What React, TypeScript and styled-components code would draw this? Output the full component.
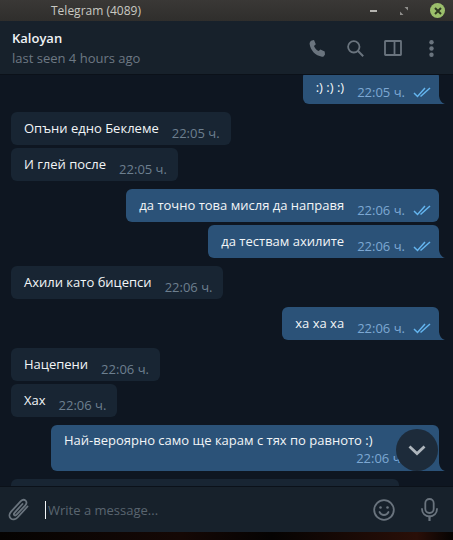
import styled, { createGlobalStyle } from 'styled-components';

const GlobalStyle = createGlobalStyle`
  html, body {
    margin: 0;
    padding: 0;
    background: #050403;
  }
  body {
    font-family: "Open Sans", "Liberation Sans", sans-serif;
  }
`;

type Message = {
  text: string;
  time: string;
  out?: boolean;
  tail?: boolean;
};

const messages: Message[] = [
  { text: 'Опъни едно Беклеме', time: '22:05 ч.' },
  { text: 'И глей после', time: '22:05 ч.' },
];

const CheckIcon = () => (
  <svg width="18" height="12" viewBox="0 0 18 12" fill="none" stroke="#64b5ef" strokeWidth="1.500">
    <path d="M1 7l3.500 3.500L12 2" />
    <path d="M7.500 10.500L17 2" />
  </svg>
);

const PhoneIcon = () => (
  <svg width="17" height="17" viewBox="0 0 17 17" fill="#6a747e">
    <path d="M2.800 .4l2.200-.4 1.800 4.300-1.800 1.700c.8 2.300 2.400 4 4.700 5.100l1.700-1.600 4.300 2.100 .3 2.800-1.200 1.800c-.5.400-1.200.6-1.900.5C6.600 15.800 1.400 10.600 .6 4.100.5 2.400 1.300 1 2.800 .4z" />
  </svg>
);

const SearchIcon = () => (
  <svg width="17" height="17" viewBox="0 0 17 17" fill="none" stroke="#6a747e" strokeWidth="1.800">
    <circle cx="6.800" cy="6.800" r="5.700" />
    <path d="M10.800 10.800L16.200 16.200" strokeWidth="2" />
  </svg>
);

const PanelIcon = () => (
  <svg width="18" height="16" viewBox="0 0 18 16" fill="none" stroke="#6a747e" strokeWidth="1.800">
    <rect x="1" y="1" width="16" height="14" rx="0.500" />
    <path d="M10.500 1v14" />
  </svg>
);

const MoreIcon = () => (
  <svg width="5" height="17" viewBox="0 0 5 17" fill="#6a747e">
    <circle cx="2.500" cy="2.300" r="2.200" />
    <circle cx="2.500" cy="8.500" r="2.200" />
    <circle cx="2.500" cy="14.700" r="2.200" />
  </svg>
);

const ClipIcon = () => (
  <svg width="22" height="24" viewBox="0 0 22 24" fill="none" stroke="#6a747e" strokeWidth="1.800" strokeLinecap="round">
    <path d="M19.500 8.500L9.500 19.500c-2 2.200-5 2.500-6.800.8-1.800-1.700-1.600-4.500.4-6.700L12.800 3.200c1.400-1.500 3.500-1.800 4.800-.6 1.300 1.200 1.100 3.200-.3 4.700L8.600 16.700c-.7.800-1.700.9-2.300.4-.6-.6-.5-1.500.2-2.300L14.500 6" />
  </svg>
);

const SmileIcon = () => (
  <svg width="22" height="22" viewBox="0 0 22 22" fill="none" stroke="#6a747e" strokeWidth="1.800" strokeLinecap="round">
    <circle cx="11" cy="11" r="9.800" />
    <circle cx="7.500" cy="8.500" r="1.300" fill="#6a747e" stroke="none" />
    <circle cx="14.500" cy="8.500" r="1.300" fill="#6a747e" stroke="none" />
    <path d="M6.500 13c1 2 2.600 3 4.500 3s3.500-1 4.500-3" />
  </svg>
);

const MicIcon = () => (
  <svg width="17" height="23" viewBox="0 0 17 23" fill="none" stroke="#6a747e" strokeWidth="1.800" strokeLinecap="round">
    <rect x="4.300" y="1" width="8.400" height="14" rx="4.200" />
    <path d="M1 11c0 4.500 3.300 7.500 7.500 7.500S16 15.500 16 11" />
    <path d="M8.500 18.500V22.500" strokeWidth="2.200" />
  </svg>
);

const Bubble = ({ text, time, out, tail }: Message) => (
  <Row $out={out}>
    <Box $out={out} $tail={tail}>
      <BubbleText>{text}</BubbleText>
      <Meta>
        <Time $out={out}>{time}</Time>
        {out && <CheckIcon />}
      </Meta>
      {tail && <Tail />}
    </Box>
  </Row>
);

export default function App() {
  return (
    <Window>
      <GlobalStyle />
      <TitleBar>
        <TitleText>Telegram (4089)</TitleText>
        <WindowControls>
          <MinButton />
          <svg width="8" height="8" viewBox="0 0 8 8" fill="#8f8e8b">
            <path d="M4.500 0H8v3.500zM0 4.500V8h3.500z" />
          </svg>
          <CloseButton>
            <svg width="8" height="8" viewBox="0 0 8 8" stroke="#2f3a22" strokeWidth="2">
              <path d="M1 1l6 6M7 1l-6 6" />
            </svg>
          </CloseButton>
        </WindowControls>
      </TitleBar>

      <Header>
        <Peer>
          <PeerName>Kaloyan</PeerName>
          <PeerStatus>last seen 4 hours ago</PeerStatus>
        </Peer>
        <HeaderIcons>
          <HeaderButton><PhoneIcon /></HeaderButton>
          <HeaderButton><SearchIcon /></HeaderButton>
          <HeaderButton><PanelIcon /></HeaderButton>
          <HeaderButton><MoreIcon /></HeaderButton>
        </HeaderIcons>
      </Header>

      <Chat>
        <FirstGroup>
          <Bubble text=":) :) :)" time="22:05 ч." out tail />
        </FirstGroup>
        <Group>
          {messages.map((m) => (
            <Bubble key={m.text} {...m} />
          ))}
        </Group>
        <Group>
          <Bubble text="да точно това мисля да направя" time="22:06 ч." out />
          <Bubble text="да тествам ахилите" time="22:06 ч." out tail />
        </Group>
        <Bubble text="Ахили като бицепси" time="22:06 ч." />
        <Bubble text="ха ха ха" time="22:06 ч." out tail />
        <Group>
          <Bubble text="Нацепени" time="22:06 ч." />
          <Bubble text="Хах" time="22:06 ч." />
        </Group>
        <Row $out>
          <TallBox>
            <BubbleText>Най-вероярно само ще карам с тях по равното :)</BubbleText>
            <TallMeta>
              <Time $out>22:06 ч.</Time>
            </TallMeta>
            <Tail />
          </TallBox>
        </Row>
        <Row>
          <ClippedBox />
        </Row>
        <ScrollDown>
          <svg width="18" height="11" viewBox="0 0 18 11" fill="none" stroke="#aeb6bd" strokeWidth="2.800">
            <path d="M1.500 1.500L9 8.500l7.500-7" />
          </svg>
        </ScrollDown>
      </Chat>

      <Composer>
        <ClipIcon />
        <Caret />
        <Placeholder>Write a message...</Placeholder>
        <ComposerIcons>
          <SmileIcon />
          <MicIcon />
        </ComposerIcons>
      </Composer>
      <Desktop />
    </Window>
  );
}

const Window = styled.div`
  width: 453px;
  height: 540px;
  display: flex;
  flex-direction: column;
  overflow: hidden;
`;

const TitleBar = styled.div`
  height: 21px;
  flex-shrink: 0;
  display: flex;
  align-items: center;
  justify-content: space-between;
  padding: 0 8px 0 51px;
  background: linear-gradient(#3a3836, #2f2e2c);
  box-sizing: border-box;
`;

const TitleText = styled.span`
  font-size: 12px;
  color: #c9c9c2;
`;

const WindowControls = styled.div`
  display: flex;
  align-items: center;
  gap: 19px;
`;

const MinButton = styled.div`
  width: 7px;
  height: 2px;
  background: #b5b4b0;
  margin-right: 4px;
`;

const CloseButton = styled.div`
  width: 15px;
  height: 15px;
  border-radius: 50%;
  background: #9bbf6b;
  display: flex;
  align-items: center;
  justify-content: center;
  margin-left: 3px;
`;

const Header = styled.div`
  height: 54px;
  flex-shrink: 0;
  display: flex;
  align-items: center;
  justify-content: space-between;
  padding: 0 3px 0 12px;
  background: #17212b;
  border-bottom: 1px solid #0b1119;
  box-sizing: border-box;
`;

const Peer = styled.div`
  display: flex;
  flex-direction: column;
  gap: 2px;
`;

const PeerName = styled.div`
  font-size: 13px;
  font-weight: 600;
  line-height: 18px;
  color: #f0f3f5;
`;

const PeerStatus = styled.div`
  font-size: 13px;
  line-height: 18px;
  color: #6d7883;
`;

const HeaderIcons = styled.div`
  display: flex;
  align-items: center;
  margin-top: 1px;
`;

const HeaderButton = styled.div`
  width: 38px;
  display: flex;
  align-items: center;
  justify-content: center;
`;

const Chat = styled.div`
  position: relative;
  flex: 1;
  min-height: 0;
  display: flex;
  flex-direction: column;
  gap: 8px;
  overflow: hidden;
  padding: 0 14px 0 11px;
  background: #0e1621;
`;

const FirstGroup = styled.div`
  margin-top: -4px;
`;

const Group = styled.div`
  display: flex;
  flex-direction: column;
  gap: 3px;
`;

const Row = styled.div<{ $out?: boolean }>`
  display: flex;
  flex-shrink: 0;
  justify-content: ${(p) => (p.$out ? 'flex-end' : 'flex-start')};
`;

const Box = styled.div<{ $out?: boolean; $tail?: boolean }>`
  position: relative;
  height: 33px;
  display: flex;
  align-items: center;
  gap: 13px;
  padding: 0 ${(p) => (p.$out ? 8 : 11)}px 0 13px;
  box-sizing: border-box;
  border-radius: 6px;
  background: ${(p) => (p.$out ? '#2b5278' : '#182533')};
  ${(p) => (p.$tail ? 'border-bottom-right-radius: 0;' : '')}
`;

const TallBox = styled.div`
  position: relative;
  width: 388px;
  height: 46px;
  padding: 8px 13px 0;
  box-sizing: border-box;
  border-radius: 6px;
  border-bottom-right-radius: 0;
  background: #2b5278;
`;

const ClippedBox = styled.div`
  width: 388px;
  height: 33px;
  border-radius: 6px;
  background: #182533;
`;

const BubbleText = styled.div`
  font-size: 13px;
  line-height: 18px;
  color: #f2f5f7;
  white-space: nowrap;
  margin-top: -2px;
`;

const Meta = styled.div`
  display: flex;
  align-items: center;
  gap: 8px;
  margin-top: 8px;
`;

const TallMeta = styled.div`
  display: flex;
  justify-content: flex-end;
  margin: 1px 22px 0 0;
`;

const Time = styled.span<{ $out?: boolean }>`
  font-size: 13px;
  line-height: 16px;
  white-space: nowrap;
  color: ${(p) => (p.$out ? '#7da8d3' : '#6d7f8f')};
`;

const Tail = styled.div`
  position: absolute;
  right: -6px;
  bottom: 0;
  width: 6px;
  height: 8px;
  background: #2b5278;
  clip-path: path('M0 0 C0.5 4 2.5 7 6 8 L0 8 Z');
`;

const ScrollDown = styled.div`
  position: absolute;
  right: 15px;
  bottom: 15px;
  width: 42px;
  height: 42px;
  border-radius: 50%;
  background: #1d2b3a;
  display: flex;
  align-items: center;
  justify-content: center;
`;

const Composer = styled.div`
  height: 46px;
  flex-shrink: 0;
  display: flex;
  align-items: center;
  padding: 0 15px 0 8px;
  background: #17212b;
  border-top: 1px solid #0b1119;
  box-sizing: border-box;
`;

const Caret = styled.div`
  width: 1px;
  height: 18px;
  margin-left: 15px;
  background: #f2f5f7;
`;

const Placeholder = styled.div`
  flex: 1;
  margin-left: 2px;
  font-size: 13px;
  color: #5a6570;
`;

const ComposerIcons = styled.div`
  display: flex;
  align-items: center;
  gap: 26px;
`;

const Desktop = styled.div`
  height: 8px;
  flex-shrink: 0;
  background: linear-gradient(90deg, #050302, #150805 40%, #050302 60%, #2a0f08 92%, #050302);
`;
